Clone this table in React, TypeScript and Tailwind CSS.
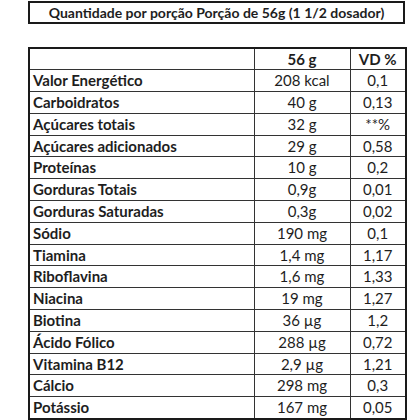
import React from "react";

const rows: [string, string, string][] = [
  ["Valor Energético", "208 kcal", "0,1"],
  ["Carboidratos", "40 g", "0,13"],
  ["Açúcares totais", "32 g", "**%"],
  ["Açúcares adicionados", "29 g", "0,58"],
  ["Proteínas", "10 g", "0,2"],
  ["Gorduras Totais", "0,9g", "0,01"],
  ["Gorduras Saturadas", "0,3g", "0,02"],
  ["Sódio", "190 mg", "0,1"],
  ["Tiamina", "1,4 mg", "1,17"],
  ["Riboflavina", "1,6 mg", "1,33"],
  ["Niacina", "19 mg", "1,27"],
  ["Biotina", "36 µg", "1,2"],
  ["Ácido Fólico", "288 µg", "0,72"],
  ["Vitamina B12", "2,9 µg", "1,21"],
  ["Cálcio", "298 mg", "0,3"],
  ["Potássio", "167 mg", "0,05"],
];

export default function App() {
  return (
    <div
      className="w-[420px] h-[420px] bg-white overflow-hidden text-[#1e1e1e]"
      style={{ fontFamily: "Lato, 'Open Sans', sans-serif" }}
    >
      <div className="ml-[28px] w-[377px] h-[23px] mt-[1px] border-2 border-[#1a1a1a] flex items-center justify-center text-[14px] font-bold leading-none">
        Quantidade por porção Porção de 56g (1 1/2 dosador)
      </div>
      <table className="ml-[28px] mt-[23px] w-[377px] border-collapse border-2 border-[#1a1a1a] table-fixed text-[15px] leading-none">
        <colgroup>
          <col className="w-[225px]" />
          <col className="w-[96px]" />
          <col className="w-[56px]" />
        </colgroup>
        <tbody>
          <tr className="h-[21.8px]">
            <td className="border border-[#333]"></td>
            <td className="border border-[#333] text-center font-bold">56 g</td>
            <td className="border border-[#333] text-center font-bold">VD %</td>
          </tr>
          {rows.map(([a, b, c]) => (
            <tr key={a} className="h-[21.8px]">
              <td className="border border-[#333] pl-[3px] font-bold">{a}</td>
              <td className="border border-[#333] text-center">{b}</td>
              <td className="border border-[#333] text-center">{c}</td>
            </tr>
          ))}
        </tbody>
      </table>
    </div>
  );
}
